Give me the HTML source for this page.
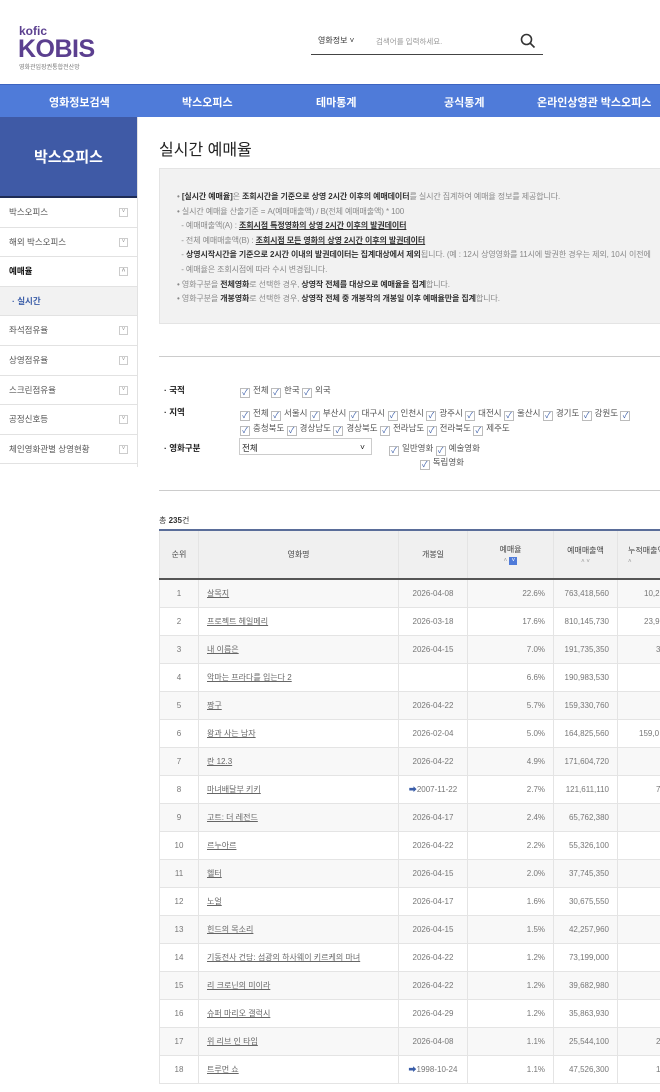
<!DOCTYPE html>
<html><head><meta charset="utf-8"><style>
*{margin:0;padding:0;box-sizing:border-box}
body{width:660px;height:1092px;overflow:hidden;background:#fff;font-family:"Liberation Sans","Noto Sans CJK KR",sans-serif;color:#333;position:relative}
.a{position:absolute}
.nav{top:84px;left:0;width:660px;height:33px;background:#4f7bd9;border-top:1px solid #3d64c0}
.nav span{position:absolute;top:9px;color:#fff;font-weight:bold;font-size:11px}
.side{left:0;top:117px;width:137px}
.ban{height:81px;background:#3f5aa6;color:#fff;font-size:15px;font-weight:bold;text-align:center;line-height:81px;border-bottom:2px solid #1e2c55}
.mi{height:29.6px;border-bottom:1px solid #e2e2e2;font-size:8.5px;color:#555;padding-left:9px;line-height:29px;position:relative}
.mi i{position:absolute;right:9px;top:10px;width:9px;height:9px;border:1px solid #ccc;font-style:normal;font-size:6px;line-height:7px;text-align:center;color:#999}
.info{left:159px;top:168px;width:510px;height:156px;background:#f2f2f2;border:1px solid #e4e4e4;font-size:8px;color:#888;padding:21px 0 0 17px;line-height:14.6px;white-space:nowrap;letter-spacing:-0.1px}
.info b{color:#333}
.info u{color:#333;font-weight:bold}
.f{font-size:8.5px;color:#555;white-space:nowrap}
.cb{display:inline-block;width:10px;height:10px;border:1px solid #bbb;vertical-align:-2px;margin-right:3px;font-size:8px;line-height:8px;text-align:center;color:#3a5da8}
table{border-collapse:collapse;font-size:8px;color:#777;table-layout:fixed}
td,th{border:1px solid #e4e4e4;height:28px;white-space:nowrap;overflow:hidden}
th{background:#f0f0f0;color:#444;font-weight:normal;height:49px;border-bottom:2px solid #555}
td.n{text-align:center}td.t{text-align:left;padding-left:8px}td.t u{color:#666}td.d{text-align:center}td.r{text-align:right;padding-right:8px}
tr:nth-child(even) td{background:#f8f8f8}
.ar{color:#3a5da8;font-size:8px}
</style></head><body>
<div class="a" style="left:19px;top:25px;color:#5b3f8f;font-weight:bold;font-size:12px;line-height:12px">kofic</div>
<div class="a" style="left:18px;top:36px;color:#5b3f8f;font-weight:bold;font-size:25px;line-height:26px;letter-spacing:-0.5px">KOBIS</div>
<div class="a" style="left:19px;top:62px;color:#777;font-size:6px">영화관입장권통합전산망</div>
<div class="a" style="left:318px;top:35px;font-size:8px;color:#333">영화정보 ˅</div>
<div class="a" style="left:376px;top:36px;font-size:7.5px;color:#999">검색어를 입력하세요.</div>
<svg class="a" style="left:520px;top:33px" width="16" height="16" viewBox="0 0 16 16"><circle cx="6.5" cy="6.5" r="5" fill="none" stroke="#333" stroke-width="1.6"/><path d="M10 10l4.5 4.5" stroke="#333" stroke-width="1.6"/></svg>
<div class="a" style="left:311px;top:54px;width:232px;height:1px;background:#444"></div>
<div class="a nav"><span style="left:49px">영화정보검색</span><span style="left:182px">박스오피스</span><span style="left:316px">테마통계</span><span style="left:444px">공식통계</span><span style="left:537px">온라인상영관 박스오피스</span></div>
<div class="a side"><div class="ban">박스오피스</div>
<div class="mi">박스오피스<i>˅</i></div><div class="mi">해외 박스오피스<i>˅</i></div><div class="mi" style="color:#111;font-weight:bold">예매율<i>˄</i></div><div class="mi" style="background:#f2f2f2;color:#3a5da8;font-weight:bold;padding-left:12px">· 실시간</div><div class="mi">좌석점유율<i>˅</i></div><div class="mi">상영점유율<i>˅</i></div><div class="mi">스크린점유율<i>˅</i></div><div class="mi">공정신호등<i>˅</i></div><div class="mi">체인영화관별 상영현황<i>˅</i></div></div>
<div class="a" style="left:137px;top:117px;width:1px;height:350px;background:#e2e2e2"></div>
<div class="a" style="left:159px;top:136px;font-size:16px;color:#222">실시간 예매율</div>
<div class="a info">• <b>[실시간 예매율]</b>은 <b>조회시간을 기준으로 상영 2시간 이후의 예매데이터</b>를 실시간 집계하여 예매율 정보를 제공합니다.<br>• 실시간 예매율 산출기준 = A(예매매출액) / B(전체 예매매출액) * 100<br>&nbsp;&nbsp;- 예매매출액(A) : <u>조회시점 특정영화의 상영 2시간 이후의 발권데이터</u><br>&nbsp;&nbsp;- 전체 예매매출액(B) : <u>조회시점 모든 영화의 상영 2시간 이후의 발권데이터</u><br>&nbsp;&nbsp;- <b>상영시작시간을 기준으로 2시간 이내의 발권데이터는 집계대상에서 제외</b>됩니다. (예 : 12시 상영영화를 11시에 발권한 경우는 제외, 10시 이전에<br>&nbsp;&nbsp;- 예매율은 조회시점에 따라 수시 변경됩니다.<br>• 영화구분을 <b>전체영화</b>로 선택한 경우, <b>상영작 전체를 대상으로 예매율을 집계</b>합니다.<br>• 영화구분을 <b>개봉영화</b>로 선택한 경우, <b>상영작 전체 중 개봉작의 개봉일 이후 예매율만을 집계</b>합니다.</div>
<div class="a" style="left:159px;top:356px;width:501px;height:1px;background:#ccc"></div>
<div class="a f" style="left:164px;top:384px;font-weight:bold;color:#222">· 국적</div>
<div class="a f" style="left:240px;top:384px"><span class="cb">✓</span>전체 <span class="cb">✓</span>한국 <span class="cb">✓</span>외국</div>
<div class="a f" style="left:164px;top:406px;font-weight:bold;color:#222">· 지역</div>
<div class="a f" style="left:240px;top:406px;line-height:14px"><span class="cb">✓</span>전체 <span class="cb">✓</span>서울시 <span class="cb">✓</span>부산시 <span class="cb">✓</span>대구시 <span class="cb">✓</span>인천시 <span class="cb">✓</span>광주시 <span class="cb">✓</span>대전시 <span class="cb">✓</span>울산시 <span class="cb">✓</span>경기도 <span class="cb">✓</span>강원도 <span class="cb">✓</span><br><span class="cb">✓</span>충청북도 <span class="cb">✓</span>경상남도 <span class="cb">✓</span>경상북도 <span class="cb">✓</span>전라남도 <span class="cb">✓</span>전라북도 <span class="cb">✓</span>제주도</div>
<div class="a f" style="left:164px;top:442px;font-weight:bold;color:#222">· 영화구분</div>
<div class="a f" style="left:239px;top:438px;width:133px;height:17px;border:1px solid #ccc;padding:3px 2px;color:#222">전체<span style="float:right;margin-right:4px">˅</span></div>
<div class="a f" style="left:389px;top:442px;line-height:13px"><span class="cb">✓</span>일반영화 <span class="cb">✓</span>예술영화<br>&nbsp;&nbsp;&nbsp;&nbsp;&nbsp;&nbsp;&nbsp;&nbsp;&nbsp;&nbsp;&nbsp;&nbsp;&nbsp;<span class="cb">✓</span>독립영화</div>
<div class="a" style="left:159px;top:490px;width:501px;height:1px;background:#ccc"></div>
<div class="a" style="left:159px;top:515px;font-size:8px;color:#333">총 <b>235</b>건</div>
<div class="a" style="left:159px;top:529px;width:501px;overflow:hidden">
<table style="width:560px;border-top:2px solid #5a6d99">
<colgroup><col style="width:39px"><col style="width:200px"><col style="width:69px"><col style="width:86px"><col style="width:64px"><col style="width:102px"></colgroup>
<tr><th>순위</th><th>영화명</th><th>개봉일</th><th>예매율<br><span style="font-size:6px;color:#999">˄</span> <span style="display:inline-block;width:8px;height:8px;background:#4f7bd9;color:#fff;font-size:6px;line-height:8px">˅</span></th><th>예매매출액<br><span style="font-size:6px;color:#999">˄ ˅</span></th><th style="text-align:left;padding-left:10px">누적매출액<br><span style="font-size:6px;color:#999">˄</span></th></tr>
<tr><td class="n">1</td><td class="t"><u>살목지</u></td><td class="d">2026-04-08</td><td class="r">22.6%</td><td class="r">763,418,560</td><td style="padding-left:26px">10,2</td></tr>
<tr><td class="n">2</td><td class="t"><u>프로젝트 헤일메리</u></td><td class="d">2026-03-18</td><td class="r">17.6%</td><td class="r">810,145,730</td><td style="padding-left:26px">23,9</td></tr>
<tr><td class="n">3</td><td class="t"><u>내 이름은</u></td><td class="d">2026-04-15</td><td class="r">7.0%</td><td class="r">191,735,350</td><td style="padding-left:38px">3</td></tr>
<tr><td class="n">4</td><td class="t"><u>악마는 프라다를 입는다 2</u></td><td class="d"></td><td class="r">6.6%</td><td class="r">190,983,530</td><td></td></tr>
<tr><td class="n">5</td><td class="t"><u>짱구</u></td><td class="d">2026-04-22</td><td class="r">5.7%</td><td class="r">159,330,760</td><td></td></tr>
<tr><td class="n">6</td><td class="t"><u>왕과 사는 남자</u></td><td class="d">2026-02-04</td><td class="r">5.0%</td><td class="r">164,825,560</td><td style="padding-left:21px">159,0</td></tr>
<tr><td class="n">7</td><td class="t"><u>란 12.3</u></td><td class="d">2026-04-22</td><td class="r">4.9%</td><td class="r">171,604,720</td><td></td></tr>
<tr><td class="n">8</td><td class="t"><u>마녀배달부 키키</u></td><td class="d"><span class="ar">➡</span>2007-11-22</td><td class="r">2.7%</td><td class="r">121,611,110</td><td style="padding-left:38px">7</td></tr>
<tr><td class="n">9</td><td class="t"><u>고트: 더 레전드</u></td><td class="d">2026-04-17</td><td class="r">2.4%</td><td class="r">65,762,380</td><td></td></tr>
<tr><td class="n">10</td><td class="t"><u>르누아르</u></td><td class="d">2026-04-22</td><td class="r">2.2%</td><td class="r">55,326,100</td><td></td></tr>
<tr><td class="n">11</td><td class="t"><u>헬터</u></td><td class="d">2026-04-15</td><td class="r">2.0%</td><td class="r">37,745,350</td><td></td></tr>
<tr><td class="n">12</td><td class="t"><u>노얼</u></td><td class="d">2026-04-17</td><td class="r">1.6%</td><td class="r">30,675,550</td><td></td></tr>
<tr><td class="n">13</td><td class="t"><u>힌드의 목소리</u></td><td class="d">2026-04-15</td><td class="r">1.5%</td><td class="r">42,257,960</td><td></td></tr>
<tr><td class="n">14</td><td class="t"><u>기동전사 건담: 섬광의 하사웨이 키르케의 마녀</u></td><td class="d">2026-04-22</td><td class="r">1.2%</td><td class="r">73,199,000</td><td></td></tr>
<tr><td class="n">15</td><td class="t"><u>리 크로닌의 미이라</u></td><td class="d">2026-04-22</td><td class="r">1.2%</td><td class="r">39,682,980</td><td></td></tr>
<tr><td class="n">16</td><td class="t"><u>슈퍼 마리오 갤럭시</u></td><td class="d">2026-04-29</td><td class="r">1.2%</td><td class="r">35,863,930</td><td></td></tr>
<tr><td class="n">17</td><td class="t"><u>위 리브 인 타임</u></td><td class="d">2026-04-08</td><td class="r">1.1%</td><td class="r">25,544,100</td><td style="padding-left:38px">2</td></tr>
<tr><td class="n">18</td><td class="t"><u>트루먼 쇼</u></td><td class="d"><span class="ar">➡</span>1998-10-24</td><td class="r">1.1%</td><td class="r">47,526,300</td><td style="padding-left:38px">1</td></tr>
</table></div>
</body></html>
